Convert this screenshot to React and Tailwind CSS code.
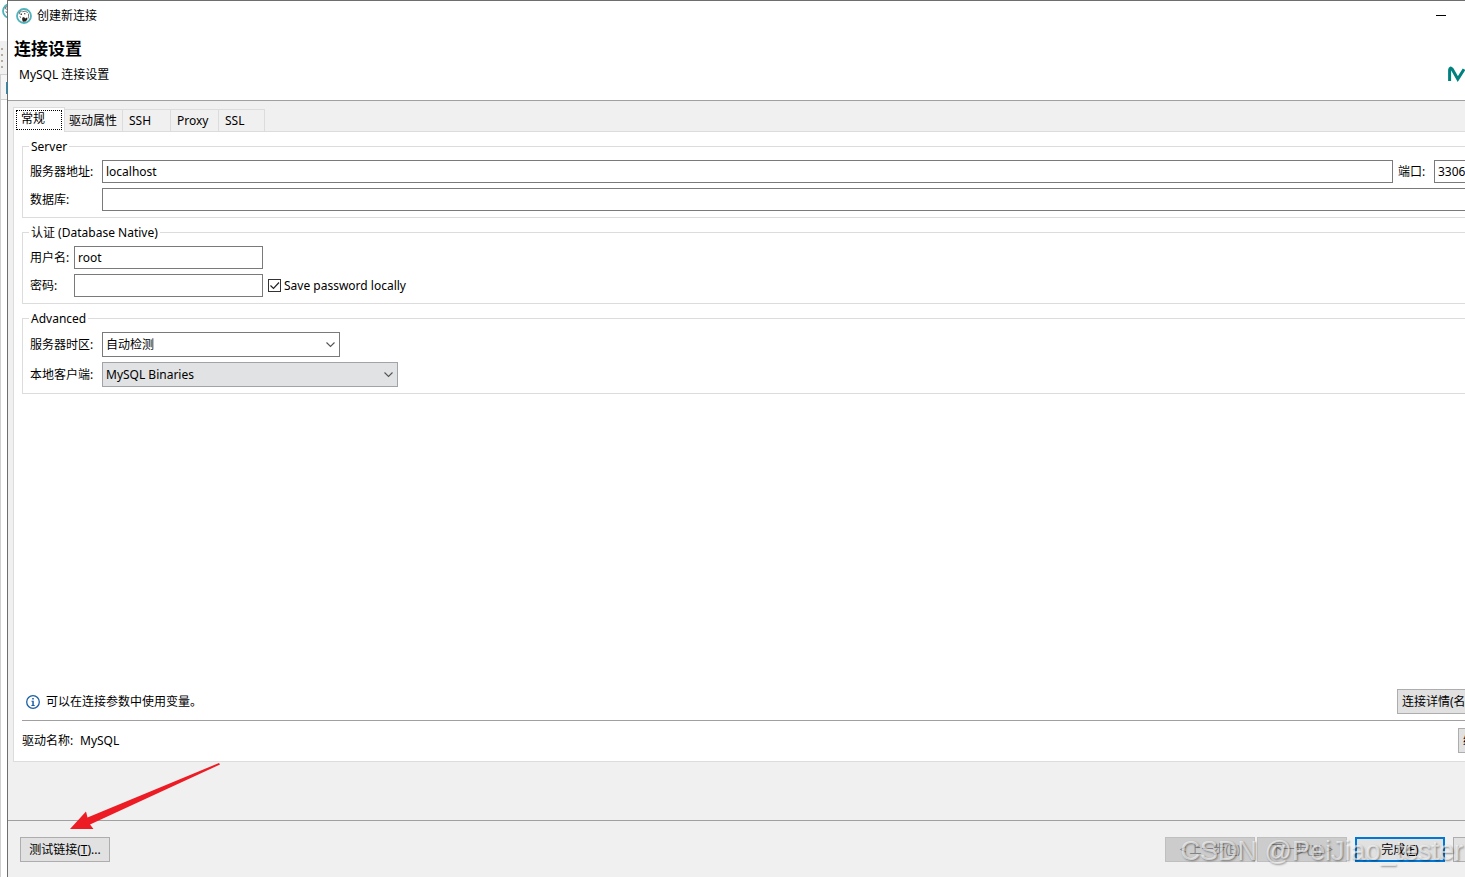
import { useState } from 'react'
import clsx from 'clsx'

const tabs = [
  { id: 'general', label: '常规', size: 'w-[52px]' },
  { id: 'driver', label: '驱动属性', size: 'w-[58px] pl-1' },
  { id: 'ssh', label: 'SSH', size: 'w-[48px] pl-[6px]' },
  { id: 'proxy', label: 'Proxy', size: 'w-[48px] pl-[6px]' },
  { id: 'ssl', label: 'SSL', size: 'w-[46px] pl-[6px]' },
]

const field = 'h-[23px] border border-[#7a7a7a] bg-white pl-[3px] outline-none focus:border-[#0078d7]'
const button = 'h-[25px] shrink-0 border border-[#adadad] bg-[#e1e1e1] whitespace-nowrap'

function BeaverIcon() {
  return (
    <svg width="16" height="16" viewBox="0 0 16 16" aria-hidden="true">
      <circle cx="8" cy="8" r="7" fill="#fff" stroke="#4fb3bb" strokeWidth="1.8" />
      <path d="M3.200 6.200 3.800 4l1.800-.6M6.200 3.800l3-.6 2.600 1.400M12.400 5.600l.2 3.200-.8 2" fill="none" stroke="#5a504d" strokeWidth=".8" />
      <path d="M4.600 5.600h1.300v1.300H4.600zM8 5.200h1.400v1H8zM3.400 8.200l1.400.6-.4 1.400z" fill="#3a302e" />
      <path d="M6.200 9.800 8 9l1.200 1.400 1.600-.8.6 1.800-1.800 2.200-2.600.2-.8-1.800z" fill="#2b2220" />
    </svg>
  )
}

function Chevron() {
  return (
    <svg className="pointer-events-none absolute top-2 right-1" width="10" height="9" viewBox="0 0 10 9" aria-hidden="true">
      <path d="M.5 2.500 4.500 6.500l4-4" fill="none" stroke="#555" strokeWidth="1.100" />
    </svg>
  )
}

function Group({ title, children }) {
  return (
    <fieldset className="min-w-0 border border-r-0 border-[#dcdcdc] pb-[6px] pl-[7px]">
      <legend className="-ml-[1px] px-[2px] pt-[2px] leading-[14px]">{title}</legend>
      {children}
    </fieldset>
  )
}

function Dropdown({ id, className, children }) {
  return (
    <div className="relative">
      <select id={id} className={clsx('block h-[25px] w-full appearance-none border pl-[3px] outline-none', className)}>
        {children}
      </select>
      <Chevron />
    </div>
  )
}

export default function App() {
  const [tab, setTab] = useState('general')

  return (
    <div className="flex min-h-screen overflow-hidden bg-white font-['Noto_Sans','Noto_Sans_CJK_SC',sans-serif] text-[12px] leading-4 text-black">
      {/* edge of the main window behind the dialog */}
      <div className="flex w-[7px] shrink-0 flex-col overflow-hidden">
        <div className="h-[41px] pt-[3px] pl-[2px]"><BeaverIcon /></div>
        <div className="flex h-[33px] flex-col gap-1 bg-[#f0f0f0] pt-[7px] pl-[1px]">
          <i className="h-[2px] w-[2px] bg-[#b5aca0]" />
          <i className="h-[2px] w-[2px] bg-[#b5aca0]" />
          <i className="h-[2px] w-[2px] bg-[#b5aca0]" />
          <i className="h-[2px] w-[2px] bg-[#b5aca0]" />
        </div>
        <div className="h-[26px] border-y border-l border-[#d0d0d0] bg-[#f5f5f5] pt-[7px] pl-[5px]">
          <div className="h-3 w-[2px] bg-[#1296c8]" />
        </div>
        <div className="flex-1 border-l border-[#d0d0d0]" />
      </div>

      <main className="flex min-w-0 flex-1 flex-col border-t border-l border-[#6e6e6e] bg-[#f0f0f0]">
        <header className="h-[100px] border-b border-[#a0a0a0] bg-white">
          <div className="flex h-[29px] items-center gap-[5px] pr-[19px] pl-2">
            <BeaverIcon />
            <span>创建新连接</span>
            <button type="button" aria-label="Minimize" className="ml-auto flex h-4 items-center">
              <span className="h-px w-[10px] bg-black" />
            </button>
          </div>
          <div className="flex justify-between">
            <div className="pt-[7px] pl-[6px]">
              <h1 className="text-[17px] leading-6 font-bold">连接设置</h1>
              <p className="pt-[6px] pl-[5px]">MySQL 连接设置</p>
            </div>
            <svg className="mt-9" width="17" height="16" viewBox="0 0 17 16" aria-hidden="true">
              <path d="M1.600 15V4Q2 .6 4.200 3.200L9.800 13 16 3.200" fill="none" stroke="#00807f" strokeWidth="3" />
            </svg>
          </div>
        </header>

        <div className="flex flex-1 flex-col pt-[6px] pl-[5px]">
          <div role="tablist" className="flex h-[25px] items-end border-b border-[#dcdcdc]">
            {tabs.map((t) => (
              <button
                key={t.id}
                type="button"
                role="tab"
                aria-selected={tab === t.id}
                onClick={() => setTab(t.id)}
                className={clsx(
                  'shrink-0 border-[#dcdcdc] text-left',
                  t.size,
                  tab === t.id ? '-mb-px h-[25px] border-x border-t bg-white p-[2px]' : 'h-[22px] border-t border-r',
                )}
              >
                {tab === t.id ? (
                  <span className="block h-[20px] border border-dotted border-black pl-1">{t.label}</span>
                ) : t.label}
              </button>
            ))}
          </div>

          <section className="flex flex-1 flex-col border-b border-l border-[#dcdcdc] bg-white pt-[6px] pl-2">
            <div className="flex flex-col gap-[6px]">
              <Group title="Server">
                <div className="grid grid-cols-[72px_1fr] items-center gap-y-[5px] pt-[6px]">
                  <label htmlFor="host">服务器地址:</label>
                  <div className="flex items-center">
                    <input id="host" defaultValue="localhost" className={clsx(field, 'min-w-0 flex-1')} />
                    <label htmlFor="port" className="w-[41px] pl-[5px]">端口:</label>
                    <input id="port" defaultValue="3306" className={clsx(field, 'w-[31px] border-r-0')} />
                  </div>
                  <label htmlFor="database">数据库:</label>
                  <input id="database" className={clsx(field, 'border-r-0')} />
                </div>
              </Group>

              <Group title="认证 (Database Native)">
                <div className="grid grid-cols-[44px_189px_1fr] items-center gap-y-[5px] pt-[6px]">
                  <label htmlFor="user">用户名:</label>
                  <input id="user" defaultValue="root" className={field} />
                  <span />
                  <label htmlFor="password">密码:</label>
                  <input id="password" type="password" className={field} />
                  <label className="flex items-center gap-[3px] pl-[5px]">
                    <span className="relative flex">
                      <input type="checkbox" defaultChecked className="peer h-[13px] w-[13px] appearance-none border border-[#333] bg-white" />
                      <svg className="pointer-events-none absolute inset-0 hidden peer-checked:block" width="13" height="13" viewBox="0 0 13 13" aria-hidden="true">
                        <path d="M2.500 6.500l3 3 5.500-6" fill="none" stroke="#222" strokeWidth="1.200" />
                      </svg>
                    </span>
                    Save password locally
                  </label>
                </div>
              </Group>

              <Group title="Advanced">
                <div className="grid grid-cols-[72px_1fr] items-center gap-y-[5px] pt-[6px]">
                  <label htmlFor="timezone">服务器时区:</label>
                  <div className="w-[238px]">
                    <Dropdown id="timezone" className="border-[#7a7a7a] bg-white">
                      <option>自动检测</option>
                    </Dropdown>
                  </div>
                  <label htmlFor="client">本地客户端:</label>
                  <div className="w-[296px]">
                    <Dropdown id="client" className="border-[#a0a4a8] bg-[#e1e2e3]">
                      <option>MySQL Binaries</option>
                    </Dropdown>
                  </div>
                </div>
              </Group>
            </div>

            <div className="mt-auto flex items-center border-b border-[#a0a0a0] pb-[6px]">
              <svg className="ml-1" width="14" height="14" viewBox="0 0 14 14" aria-hidden="true">
                <circle cx="7" cy="7" r="6.300" fill="#fff" stroke="#1c5fa5" strokeWidth="1.300" />
                <path d="M6.200 3h1.600v1.500H6.200zM5.500 5.800h2.300v4.200h.9v1H5.400v-1h.9V6.800h-.8z" fill="#1c5fa5" />
              </svg>
              <span className="pl-[6px]">可以在连接参数中使用变量。</span>
              <button type="button" className={clsx(button, 'ml-auto w-[68px] overflow-hidden border-r-0 pl-1 text-left')}>连接详情(名</button>
            </div>
            <div className="flex items-center pt-[7px] pb-2">
              <span className="w-[58px]">驱动名称:</span>
              <span>MySQL</span>
              <button type="button" className={clsx(button, 'ml-auto w-[7px] overflow-hidden border-r-0 pl-1 text-left')}>编</button>
            </div>
          </section>
          <div className="h-[58px]" />
        </div>

        <footer className="relative flex h-[57px] items-start border-t border-[#a0a0a0] pt-4 pl-3">
          <button type="button" className={clsx(button, 'w-[90px]')}>测试链接(<u>T</u>)...</button>
          <svg className="pointer-events-none absolute -top-[58px] left-[62px]" width="152" height="70" viewBox="0 0 152 70" aria-hidden="true">
            <path d="M149 0 150 1.500 20 61.500 23.500 66H0L16 48.500 17.500 54.500z" fill="#ed1c24" />
          </svg>
          <div className="ml-auto flex">
            <button type="button" disabled className="h-[25px] w-[90px] border border-[#bfbfbf] bg-[#ccc] text-[#838383]">&lt; 上一步(<u>B</u>)</button>
            <button type="button" disabled className="ml-[2px] h-[25px] w-[90px] border border-[#bfbfbf] bg-[#ccc] text-[#838383]">下一步(<u>N</u>) &gt;</button>
            <button type="button" className="ml-2 h-[25px] w-[90px] border-2 border-[#0078d7] bg-[#e1e1e1]">完成(<u>F</u>)</button>
            <button type="button" aria-label="Cancel" className={clsx(button, 'ml-2 w-3 border-r-0')} />
          </div>
          <span className="pointer-events-none absolute top-[14px] right-[2px] font-['Liberation_Sans',sans-serif] text-[27px] leading-8 whitespace-nowrap text-white/60 [text-shadow:1px_1px_2px_rgba(0,0,0,0.4)]">CSDN @PeiJiao_tester</span>
        </footer>
      </main>
    </div>
  )
}
